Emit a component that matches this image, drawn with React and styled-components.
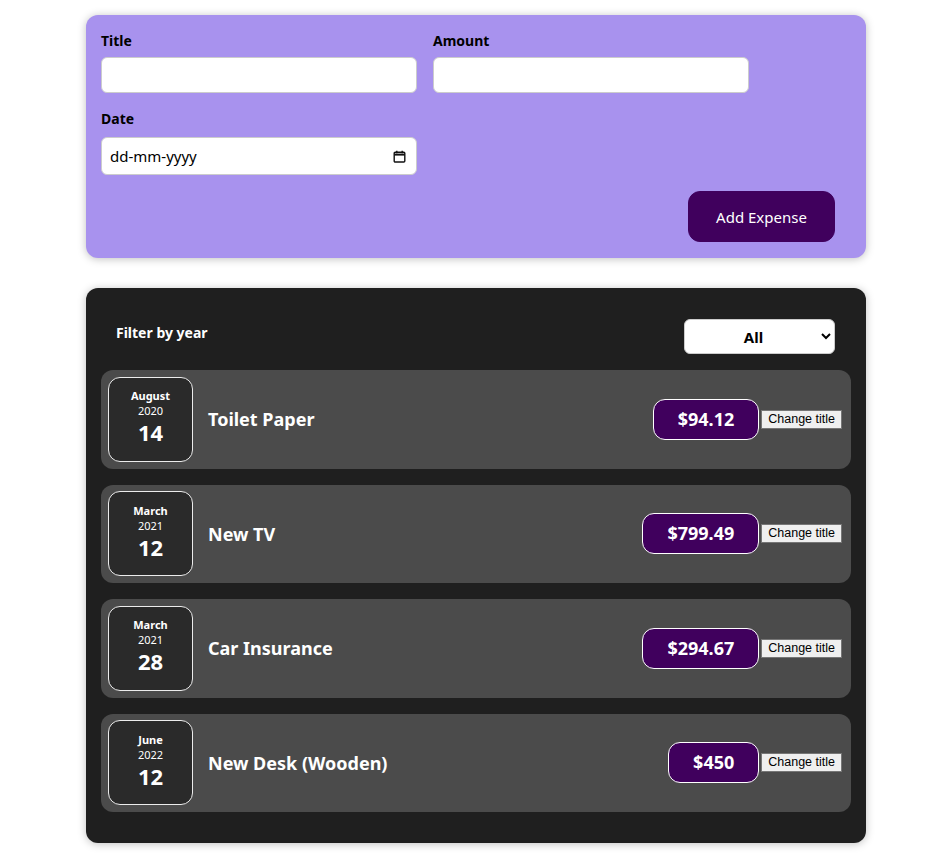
import styled, { createGlobalStyle } from "styled-components";

const expenses = [
  { id: "e1", title: "Toilet Paper", amount: 94.12, month: "August", year: 2020, day: 14 },
  { id: "e2", title: "New TV", amount: 799.49, month: "March", year: 2021, day: 12 },
  { id: "e3", title: "Car Insurance", amount: 294.67, month: "March", year: 2021, day: 28 },
  { id: "e4", title: "New Desk (Wooden)", amount: 450, month: "June", year: 2022, day: 12 },
];

function CalendarIcon() {
  return (
    <svg width="13" height="13" viewBox="0 0 13 13" fill="none">
      <rect x="1.2" y="2.2" width="10.6" height="9.8" rx="1" stroke="#111" strokeWidth="1.4" />
      <path d="M1.2 4.6h10.6" stroke="#111" strokeWidth="2" />
      <path d="M3.8 0.8v2.4M9.2 0.8v2.4" stroke="#111" strokeWidth="1.4" />
    </svg>
  );
}

export default function App() {
  return (
    <Page>
      <GlobalStyle />
      <NewExpense>
        <form>
          <Controls>
            <Control>
              <Label>Title</Label>
              <Input type="text" />
            </Control>
            <Control>
              <Label>Amount</Label>
              <Input type="number" min="0.01" step="0.01" />
            </Control>
            <Control>
              <Label>Date</Label>
              <DateField>
                <Input type="text" placeholder="dd-mm-yyyy" $date />
                <CalendarButton type="button" aria-label="Open calendar">
                  <CalendarIcon />
                </CalendarButton>
              </DateField>
            </Control>
          </Controls>
          <Actions>
            <SubmitButton type="submit">Add Expense</SubmitButton>
          </Actions>
        </form>
      </NewExpense>

      <ExpensesCard>
        <FilterRow>
          <FilterLabel>Filter by year</FilterLabel>
          <YearSelect defaultValue="all">
            <option value="all">All</option>
            <option value="2020">2020</option>
            <option value="2021">2021</option>
            <option value="2022">2022</option>
          </YearSelect>
        </FilterRow>
        <List>
          {expenses.map((expense) => (
            <Item key={expense.id}>
              <DateBox>
                <Month>{expense.month}</Month>
                <Year>{expense.year}</Year>
                <Day>{expense.day}</Day>
              </DateBox>
              <Description>
                <ItemTitle>{expense.title}</ItemTitle>
                <Price>${expense.amount}</Price>
              </Description>
              <ChangeButton type="button">Change title</ChangeButton>
            </Item>
          ))}
        </List>
      </ExpensesCard>
    </Page>
  );
}

const GlobalStyle = createGlobalStyle`
  * {
    box-sizing: border-box;
  }

  body {
    margin: 0;
    background: #ffffff;
    font-family: "Noto Sans", "Open Sans", sans-serif;
  }
`;

const Page = styled.div`
  padding: 15px 0 14px 86px;
`;

const NewExpense = styled.div`
  width: 780px;
  padding: 16px 31px 16px 15px;
  background: #a892ee;
  border-radius: 12px;
  box-shadow: 0 1px 8px rgba(0, 0, 0, 0.25);
`;

const Controls = styled.div`
  display: flex;
  flex-wrap: wrap;
  gap: 16px;
`;

const Control = styled.div`
  width: 316px;
`;

const Label = styled.label`
  display: block;
  font-weight: bold;
  font-size: 14px;
  line-height: 20px;
  margin-bottom: 6px;
  color: #000;
`;

const Input = styled.input`
  display: block;
  width: 100%;
  height: ${(p) => (p.$date ? "38px" : "36px")};
  padding: 0 8px;
  border: 1px solid #ccc;
  border-radius: 6px;
  background: #fff;
  font: inherit;
  font-size: 15px;
  color: #000;

  &::placeholder {
    color: #000;
  }
`;

const DateField = styled.div`
  position: relative;
  padding-top: 2px;
`;

const CalendarButton = styled.button`
  position: absolute;
  right: 11px;
  top: 15px;
  display: flex;
  padding: 0;
  border: 0;
  background: none;
  cursor: pointer;
`;

const Actions = styled.div`
  display: flex;
  justify-content: flex-end;
  margin-top: 16px;
`;

const SubmitButton = styled.button`
  width: 147px;
  height: 51px;
  border: 1px solid #40005d;
  border-radius: 12px;
  background: #40005d;
  color: #fff;
  font-family: inherit;
  font-size: 15px;
  cursor: pointer;
`;

const ExpensesCard = styled.div`
  width: 780px;
  margin-top: 30px;
  padding: 15px 15px 15px;
  background: #1f1f1f;
  border-radius: 12px;
  box-shadow: 0 1px 8px rgba(0, 0, 0, 0.25);
`;

const FilterRow = styled.div`
  display: flex;
  justify-content: space-between;
  align-items: center;
  margin: 16px 0;
  padding: 0 16px 0 15px;
`;

const FilterLabel = styled.label`
  color: #fff;
  font-weight: bold;
  font-size: 14px;
  margin-top: -8px;
`;

const YearSelect = styled.select`
  width: 151px;
  height: 35px;
  padding: 0 8px;
  border: 1px solid #ccc;
  border-radius: 6px;
  background: #fff;
  font-family: inherit;
  font-weight: bold;
  font-size: 15px;
  text-align: center;
`;

const List = styled.ul`
  list-style: none;
  margin: 0;
  padding: 0 0 16px;
  display: flex;
  flex-direction: column;
  gap: 16px;
`;

const Item = styled.li`
  display: flex;
  align-items: center;
  height: 98.5px;
  padding: 7px 9px 7px 7px;
  background: #4b4b4b;
  border-radius: 12px;
`;

const DateBox = styled.div`
  width: 85px;
  height: 85px;
  display: flex;
  flex-direction: column;
  align-items: center;
  justify-content: center;
  border: 1px solid #ececec;
  border-radius: 12px;
  background: #2a2a2a;
  color: #fff;
  padding-bottom: 4px;
`;

const Month = styled.div`
  font-size: 11px;
  font-weight: bold;
  line-height: 15px;
`;

const Year = styled.div`
  font-size: 11px;
  line-height: 15px;
`;

const Day = styled.div`
  font-size: 22px;
  font-weight: bold;
  line-height: 28px;
`;

const Description = styled.div`
  flex: 1;
  display: flex;
  align-items: center;
  justify-content: space-between;
  margin-left: 15px;
  gap: 16px;
`;

const ItemTitle = styled.h2`
  margin: 0;
  color: #fff;
  font-size: 18px;
  font-weight: bold;
`;

const Price = styled.div`
  padding: 7px 24px;
  border: 1px solid #fff;
  border-radius: 12px;
  background: #40005d;
  color: #fff;
  font-size: 18px;
  font-weight: bold;
  line-height: 25px;
`;

const ChangeButton = styled.button`
  margin-left: 2px;
  padding: 1px 6px;
  height: 19px;
  border: 1px solid #767676;
  border-radius: 0;
  background: #efefef;
  color: #000;
  font-family: "Liberation Sans", Arial, sans-serif;
  font-size: 12.5px;
  line-height: 15px;
`;
